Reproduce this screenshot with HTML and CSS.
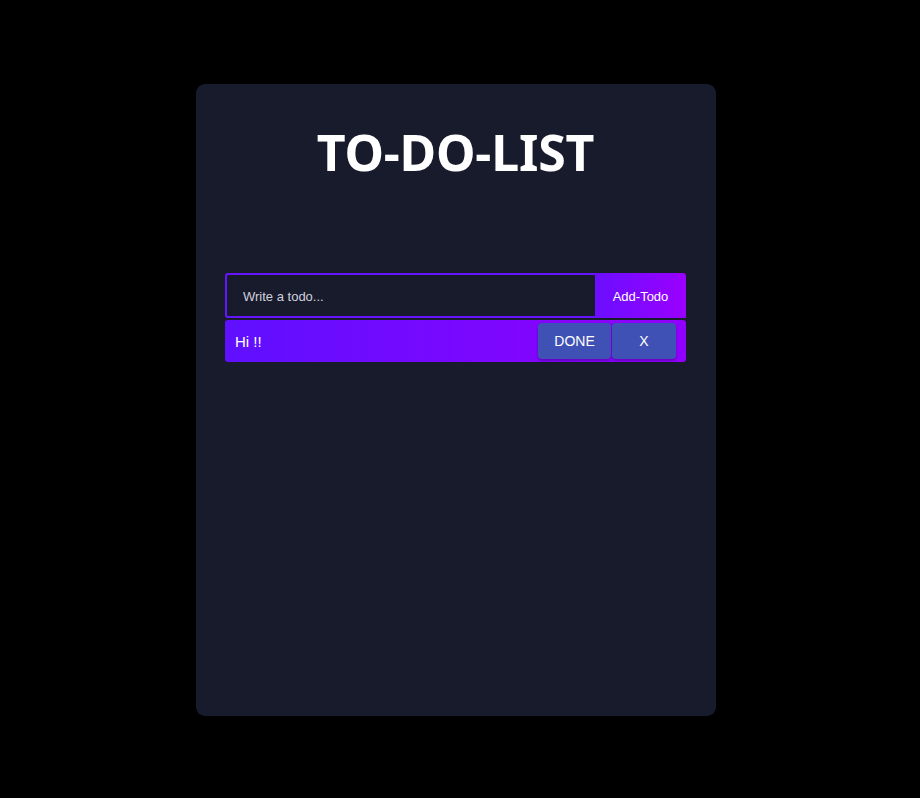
FILE: index.html
```html
<!DOCTYPE html>
<html lang="en">
<head>
<meta charset="utf-8">
<title>TO-DO-LIST</title>
<link rel="stylesheet" href="styles.css">
</head>
<body>
<div class="page">
  <div class="card">
    <h1 class="title">TO-DO-LIST</h1>
    <form class="todo-form" onsubmit="return false">
      <input class="todo-input" type="text" placeholder="Write a todo...">
      <button class="add-btn" type="submit">Add-Todo</button>
    </form>
    <div class="todo-item">
      <span class="todo-text">Hi !!</span>
      <div class="todo-actions">
        <button class="act-btn done">DONE</button>
        <button class="act-btn del">X</button>
      </div>
    </div>
  </div>
</div>
</body>
</html>
```
FILE: styles.css
```css
* { box-sizing: border-box; }
html, body { margin: 0; padding: 0; background: #000; }
body { font-family: "Liberation Sans", Arial, sans-serif; }
.page {
  display: flex;
  justify-content: center;
  padding: 84px 8px 0 0;
  min-height: 798px;
}
.card {
  width: 520px;
  height: 632px;
  background: #181b2c;
  border-radius: 9px;
  padding: 0 30px 0 29px;
}
.title {
  margin: 0;
  padding-top: 43px;
  height: 189px;
  text-align: center;
  color: #fff;
  font-family: "Noto Sans", "Open Sans", sans-serif;
  font-weight: 700;
  font-size: 50px;
  line-height: 1;
  letter-spacing: -0.2px;
}
.todo-form {
  display: flex;
  height: 45px;
  margin: 0;
}
.todo-input {
  flex: 1;
  height: 45px;
  background: #181b2c;
  border: 2px solid #6515ff;
  border-right: 0;
  border-radius: 3px 0 0 3px;
  padding: 1px 16px 0;
  color: #fff;
  font-family: "Liberation Sans", Arial, sans-serif;
  font-size: 13px;
  outline: none;
}
.todo-input::placeholder { color: #d0d0dc; }
.add-btn {
  width: 91px;
  height: 45px;
  border: 0;
  border-radius: 0 3px 0 0;
  background: linear-gradient(90deg, #6b0eff, #9a00ff);
  color: #fff;
  font-family: "Liberation Sans", Arial, sans-serif;
  font-size: 13px;
  padding: 1px 0 0;
  cursor: pointer;
}
.todo-item {
  margin-top: 2px;
  height: 42px;
  display: flex;
  align-items: center;
  justify-content: space-between;
  background: linear-gradient(90deg, #5f10ff, #9100ff);
  border-radius: 3px;
  padding: 0 10px 0 10px;
}
.todo-text {
  color: #fff;
  font-size: 15px;
}
.todo-actions {
  display: flex;
  gap: 1px;
  height: 36px;
}
.act-btn {
  height: 36px;
  border: 0;
  border-radius: 4px;
  background: #3f51b5;
  color: #fff;
  font-family: "Liberation Sans", Arial, sans-serif;
  font-size: 14px;
  padding: 0;
  box-shadow: 0 2px 3px rgba(0,0,0,0.25);
  cursor: pointer;
}
.act-btn.done { width: 73px; }
.act-btn.del { width: 64px; }
```
